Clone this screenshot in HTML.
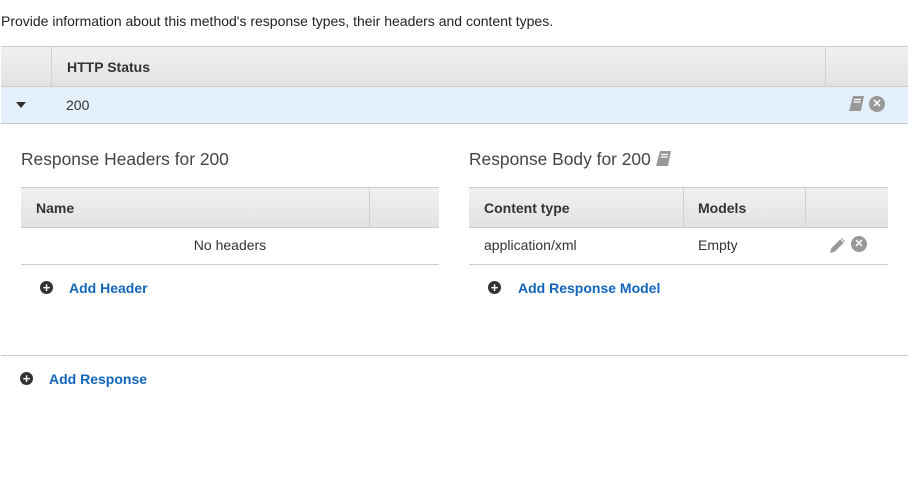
<!DOCTYPE html>
<html><head><style>
body{margin:0;width:912px;height:489px;background:#fff;font-family:"Liberation Sans",sans-serif;color:#333;position:relative;overflow:hidden}
.a{position:absolute}
.hd{background:linear-gradient(#f1f1f1,#e2e2e2);border-top:1px solid #ccc;border-bottom:1px solid #ccc;box-sizing:border-box}
.vl{position:absolute;top:0;bottom:0;width:1px;background:#d0d0d0}
.th{position:absolute;font-size:14px;font-weight:bold;color:#333}
.td{position:absolute;font-size:14px;color:#333}
.t{font-size:17.4px;color:#444}
.lnk{font-size:14px;font-weight:bold;color:#1166bb}
.plus{width:13px;height:13px;border-radius:50%;background:#333;color:#fff;font-size:13px;font-weight:bold;line-height:13px;text-align:center}
.x{display:inline-block;width:16px;height:16px;border-radius:50%;background:#999;color:#fff;font-size:11px;font-weight:bold;line-height:16px;text-align:center}
</style></head><body>
<div class="a" style="left:1px;top:13px;font-size:14px;color:#222">Provide information about this method's response types, their headers and content types.</div>

<div class="a hd" style="left:1px;top:46px;width:907px;height:41px">
 <div class="vl" style="left:50px"></div><div class="vl" style="left:824px"></div>
 <div class="th" style="left:66px;top:12px">HTTP Status</div>
</div>
<div class="a" style="left:1px;top:87px;width:907px;height:37px;background:#e4f0fc;border-bottom:1px solid #c8c8c8;box-sizing:border-box">
 <div class="a" style="left:15px;top:15px;width:0;height:0;border-left:5px solid transparent;border-right:5px solid transparent;border-top:6px solid #333"></div>
 <div class="td" style="left:65px;top:10px">200</div>
 <svg class="a" style="left:847px;top:9px" width="17" height="16" viewBox="0 0 17 16"><path d="M5 0h11l-3 15H1z" fill="#999"/><path d="M6 3.5h7M5.5 6h7" stroke="#fff" stroke-width="1.2"/></svg>
 <span class="a x" style="left:868px;top:9px">✕</span>
</div>

<div class="a t" style="left:21px;top:149px">Response Headers for 200</div>
<div class="a hd" style="left:21px;top:187px;width:418px;height:41px">
 <div class="vl" style="left:348px"></div>
 <div class="th" style="left:15px;top:12px">Name</div>
</div>
<div class="a" style="left:21px;top:228px;width:418px;height:37px;border-bottom:1px solid #ccc;box-sizing:border-box">
 <div class="td" style="left:0;width:418px;text-align:center;top:9px">No headers</div>
</div>
<div class="a plus" style="left:40px;top:281px">+</div>
<div class="a lnk" style="left:69px;top:280px">Add Header</div>

<div class="a t" style="left:469px;top:149px">Response Body for 200</div>
<svg class="a" style="left:655px;top:151px" width="17" height="16" viewBox="0 0 17 16"><path d="M5 0h11l-3 15H1z" fill="#999"/><path d="M6 3.5h7M5.5 6h7" stroke="#fff" stroke-width="1.2"/></svg>
<div class="a hd" style="left:469px;top:187px;width:419px;height:41px">
 <div class="vl" style="left:214px"></div><div class="vl" style="left:336px"></div>
 <div class="th" style="left:15px;top:12px">Content type</div>
 <div class="th" style="left:229px;top:12px">Models</div>
</div>
<div class="a" style="left:469px;top:228px;width:419px;height:37px;border-bottom:1px solid #ccc;box-sizing:border-box">
 <div class="td" style="left:15px;top:9px">application/xml</div>
 <div class="td" style="left:229px;top:9px">Empty</div>
 <svg class="a" style="left:360px;top:8px" width="18" height="18" viewBox="0 0 18 18"><path d="M1 17l1.5-5 10-10 3.5 3.5-10 10z" fill="#999"/><path d="M11.5 3l3.5 3.5" stroke="#fff" stroke-width="1"/></svg>
 <span class="a x" style="left:382px;top:8px">✕</span>
</div>
<div class="a plus" style="left:488px;top:281px">+</div>
<div class="a lnk" style="left:518px;top:280px">Add Response Model</div>

<div class="a" style="left:1px;top:355px;width:907px;height:1px;background:#ccc"></div>
<div class="a plus" style="left:20px;top:372px">+</div>
<div class="a lnk" style="left:49px;top:371px">Add Response</div>
</body></html>
